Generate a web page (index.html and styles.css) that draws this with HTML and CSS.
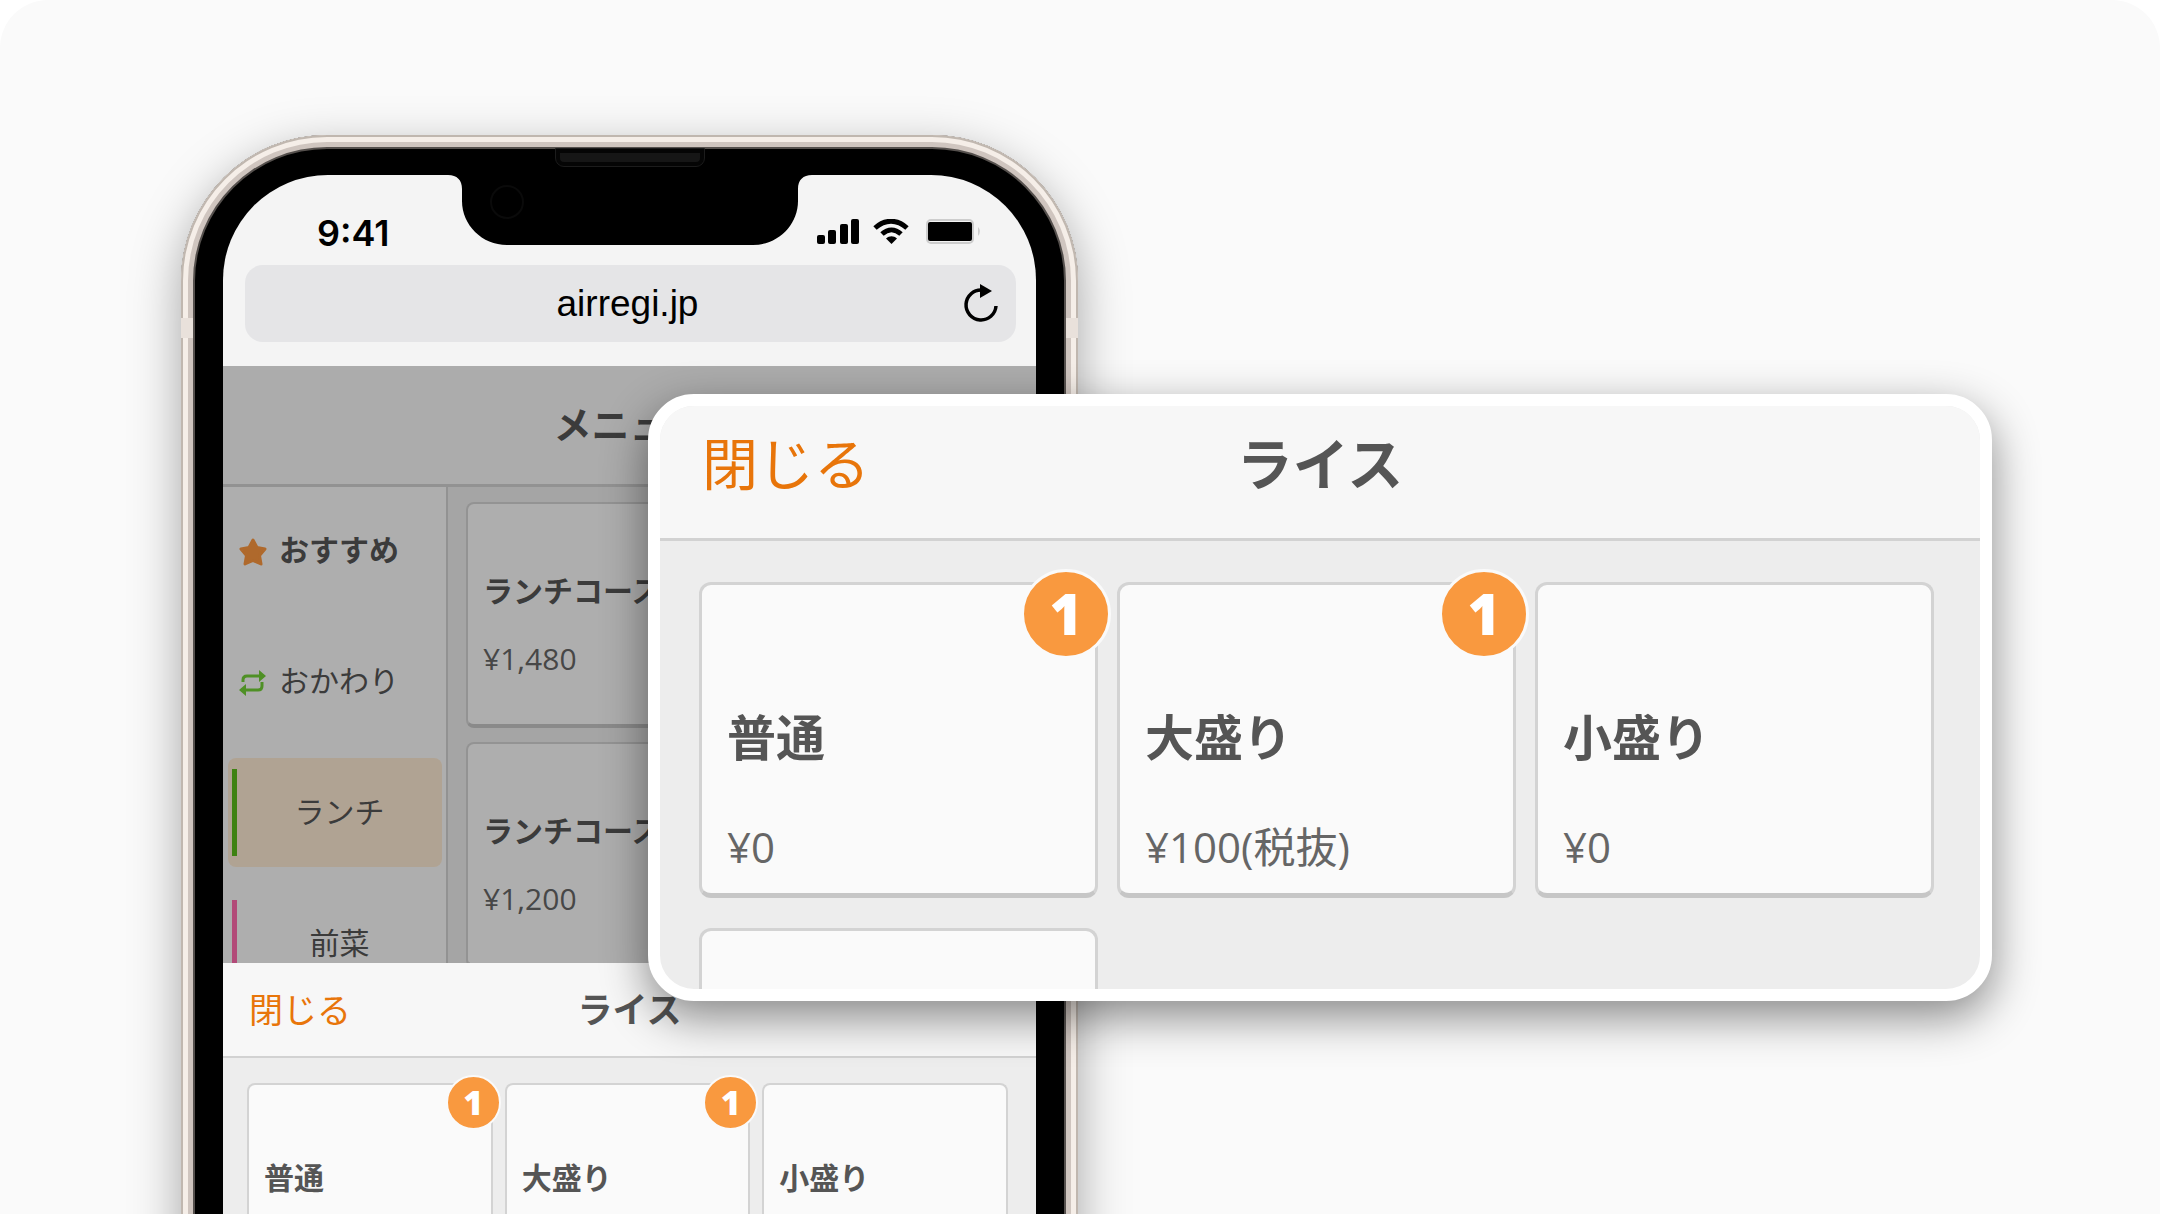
FILE: index.html
```html
<!DOCTYPE html>
<html lang="ja">
<head>
    <meta charset="UTF-8">
    <meta name="viewport" content="width=device-width, initial-scale=1.0">
    <title>ライス</title>
    <link rel="stylesheet" href="styles.css">
</head>
<body>
    <main class="stage">
        <div class="phone">
            <span class="speaker"></span>
            <div class="screen">
                <svg class="notch" viewBox="0 0 364 70" aria-hidden="true">
                    <path d="M0 0C9 0 14 5 14 14V26C14 50 34 70 59 70H305C330 70 350 50 350 26V14C350 5 355 0 364 0Z"/>
                    <circle cx="59" cy="27" r="16" fill="none" stroke="#0a0a0a" stroke-width="2"/>
                </svg>
                <div class="status">
                    <span class="time">9:41</span>
                    <svg class="status-icons" width="166" height="28" viewBox="0 0 166 28" aria-hidden="true">
                        <rect x="0" y="16" width="8" height="9" rx="2"/>
                        <rect x="11" y="11" width="8" height="14" rx="2"/>
                        <rect x="23" y="5" width="8" height="20" rx="2"/>
                        <rect x="34" y="0" width="8" height="25" rx="2"/>
                        <path d="M58 9C68 0 80 0 90 9" fill="none" stroke="#000" stroke-width="5"/>
                        <path d="M65 15C71 9.500 78 9.500 84 15" fill="none" stroke="#000" stroke-width="5"/>
                        <path d="M69 19.500C72.500 16.500 76.500 16.500 80 19.500L74.500 25Z"/>
                        <rect x="110" y="1" width="46" height="23" rx="4" fill="none" stroke="#cdcdcd" stroke-width="2"/>
                        <rect x="111" y="3" width="44" height="19" rx="2"/>
                        <path d="M161 8Q165 12 161 17Z" fill="#cdcdcd"/>
                    </svg>
                </div>
                <div class="url-bar">
                    <input class="url" type="text" value="airregi.jp" aria-label="アドレス">
                    <button class="reload" aria-label="再読み込み">
                        <svg width="38" height="40" viewBox="0 0 38 40">
                            <path d="M20 6A15 15 0 1 0 34 22" fill="none" stroke="#000" stroke-width="3.500"/>
                            <path d="M18 0L30 7L18 14Z"/>
                        </svg>
                    </button>
                </div>

                <section class="app">
                    <h1 class="app-title">メニュー</h1>
                    <div class="app-body">
                        <nav class="side">
                            <button class="side-item strong">
                                <svg width="30" height="30" viewBox="0 0 30 30"><path d="M15 3L19 10.500L27 12L21.500 18.500L23 27L15 23.500L7 27L8.500 18.500L3 12L11 10.500Z" fill="#fb973f" stroke="#fb973f" stroke-width="3" stroke-linejoin="round"/></svg>
                                おすすめ
                            </button>
                            <button class="side-item">
                                <svg width="30" height="30" viewBox="0 0 30 30" fill="none" stroke="#71ce36" stroke-width="3">
                                    <path d="M5 14V12Q5 8 9 8H22"/>
                                    <path d="M24 14V18Q24 22 20 22H7"/>
                                    <path d="M21 2L28 8L21 14Z M8 16L1 22L8 28Z" fill="#71ce36" stroke="none"/>
                                </svg>
                                おかわり
                            </button>
                            <button class="side-item category selected">ランチ</button>
                            <button class="side-item category pink">前菜</button>
                        </nav>
                        <div class="courses">
                            <button class="card course">
                                <span class="name">ランチコース</span>
                                <span class="price">¥1,480</span>
                            </button>
                            <button class="card course">
                                <span class="name">ランチコース</span>
                                <span class="price">¥1,200</span>
                            </button>
                        </div>
                    </div>
                </section>

                <section class="sheet">
                    <header class="sheet-head">
                        <button class="close">閉じる</button>
                        <h2 class="sheet-title">ライス</h2>
                    </header>
                    <div class="options">
                        <button class="card">
                            <span class="name">普通</span>
                            <span class="badge">1</span>
                        </button>
                        <button class="card">
                            <span class="name">大盛り</span>
                            <span class="badge">1</span>
                        </button>
                        <button class="card">
                            <span class="name">小盛り</span>
                        </button>
                    </div>
                </section>
            </div>
        </div>

        <section class="sheet popup">
            <header class="sheet-head">
                <button class="close">閉じる</button>
                <h2 class="sheet-title">ライス</h2>
            </header>
            <div class="options">
                <button class="card">
                    <span class="name">普通</span>
                    <span class="price">¥0</span>
                    <span class="badge">1</span>
                </button>
                <button class="card">
                    <span class="name">大盛り</span>
                    <span class="price">¥100(税抜)</span>
                    <span class="badge">1</span>
                </button>
                <button class="card">
                    <span class="name">小盛り</span>
                    <span class="price">¥0</span>
                </button>
                <button class="card"></button>
            </div>
        </section>
    </main>
</body>
</html>
```
FILE: styles.css
```css
* {
    box-sizing: border-box;
}
body {
    margin: 0;
    background: white;
    color: #555;
    font-family: "Open Sans", "Noto Sans CJK JP", sans-serif;
}
button {
    margin: 0;
    padding: 0;
    border: none;
    background: none;
    color: inherit;
    font-family: inherit;
    cursor: pointer;
}
h1, h2 {
    margin: 0;
}
.stage {
    display: grid;
    grid-template-columns: 181fr 467fr 430fr 914fr 168fr;
    grid-template-rows: 100%;
    height: calc(100vh - 2px);
    overflow: hidden;
    background: #fafafa;
    border-radius: 48px 48px 0 0;
}

/* phone */
.phone {
    grid-column: 2 / 4;
    grid-row: 1;
    position: relative;
    min-width: 0;
    margin: 135px 0 -200px;
    padding: 40px 42px 0;
    background: black;
    border-radius: 146px 146px 0 0;
    box-shadow: inset 0 0 0 2px #c0b7af, inset 0 0 0 7px #f5eee8, inset 0 0 0 12px #cfc5bf, inset 0 0 0 14px #55504d, 0 16px 50px rgba(0, 0, 0, 0.34);
}
/* antenna bands on both edges of the frame */
.phone::before,
.phone::after {
    content: "";
    position: absolute;
    top: 183px;
    left: 0;
    width: 12px;
    height: 20px;
    background: #e9e1db;
}
.phone::after {
    right: 0;
    left: auto;
}
.speaker {
    position: absolute;
    top: 14px;
    left: 50%;
    width: 148px;
    height: 17px;
    margin-left: -74px;
    background: #161616;
    border: 4px solid #050505;
    border-radius: 0 0 8px 8px;
    outline: 1px solid #1c1c1c;
}
.screen {
    position: relative;
    height: 100%;
    overflow: hidden;
    background: #f4f4f4;
    border-radius: 105px 105px 0 0;
}
.notch {
    position: absolute;
    top: 0;
    left: 50%;
    width: 364px;
    margin-left: -182px;
}
.status {
    display: flex;
    justify-content: space-between;
    align-items: center;
    height: 90px;
    padding: 26px 53px 0 94px;
}
.time {
    color: black;
    font-family: Inter, sans-serif;
    font-size: 36px;
    font-weight: 600;
    line-height: 40px;
}
.url-bar {
    display: flex;
    align-items: center;
    height: 77px;
    margin: 0 20px 24px 22px;
    padding: 0 16px;
    background: #e5e5e7;
    border-radius: 18px;
}
.url {
    flex: 1;
    min-width: 0;
    padding: 0 0 0 32px;
    border: none;
    background: none;
    color: black;
    font-family: "Liberation Sans", Arial, sans-serif;
    font-size: 37px;
    text-align: center;
}
.reload svg {
    display: block;
}

/* menu behind the sheet */
.app {
    position: relative;
    display: flex;
    flex-direction: column;
    height: 597px;
    overflow: hidden;
    background: #ededed;
}
.app::after {
    content: "";
    position: absolute;
    inset: 0;
    background: rgba(0, 0, 0, 0.3);
}
.app-title {
    flex: none;
    height: 121px;
    background: #f7f7f7;
    border-bottom: 3px solid #d1d1d1;
    font-size: 38px;
    line-height: 116px;
    text-align: center;
}
.app-body {
    display: flex;
    flex: 1;
}
.side {
    display: flex;
    flex-direction: column;
    gap: 22px;
    width: 225px;
    padding: 9px 4px 0 5px;
    background: #fafafa;
    border-right: 2px solid #d1d1d1;
}
.side-item {
    display: flex;
    flex: none;
    align-items: center;
    gap: 11px;
    height: 109px;
    padding: 0 0 6px 10px;
    border-radius: 8px;
    font-size: 30px;
}
.side-item svg {
    margin-top: 8px;
}
.strong {
    font-weight: bold;
}
.category {
    gap: 0;
    padding-left: 4px;
}
.category::before {
    content: "";
    width: 5px;
    height: 87px;
    margin: 6px auto 0 0;
    background: #5aba1a;
}
.category::after {
    content: "";
    margin-right: auto;
}
.pink::before {
    background: #ff6aac;
}
.selected {
    background: #fdead3;
}
.courses {
    display: flex;
    flex: 1;
    flex-direction: column;
    gap: 14px;
    padding: 15px 18px 0;
}

/* cards */
.card {
    position: relative;
    display: flex;
    flex: none;
    flex-direction: column;
    align-items: flex-start;
    height: 196px;
    padding: 75px 15px 0;
    background: #fafafa;
    border: 2px solid #d3d3d3;
    border-bottom: 4px solid #c6c6c6;
    border-radius: 8px;
    font-size: 30px;
    line-height: 36px;
}
.course {
    height: 226px;
    padding-top: 69px;
    gap: 32px;
}
.name {
    font-weight: bold;
}
.price {
    color: #666;
}
.badge {
    position: absolute;
    top: -10px;
    right: -10px;
    width: 55px;
    height: 55px;
    background: #f9993f;
    border: 2px solid #fafafa;
    border-radius: 50%;
    color: white;
    font-size: 34px;
    font-weight: 800;
    line-height: 50px;
    text-align: center;
}

/* sheet */
.sheet {
    height: 400px;
    background: #ededed;
}
.sheet-head {
    display: grid;
    grid-template-columns: 1fr auto 1fr;
    align-items: center;
    justify-items: start;
    height: 95px;
    padding: 0 26px;
    background: #f7f7f7;
    border-bottom: 2px solid #d2d2d2;
}
.close {
    color: #e8750a;
    font-size: 34px;
    line-height: 40px;
}
.sheet-title {
    font-size: 35px;
    line-height: 40px;
}
.options {
    display: grid;
    grid-template-columns: repeat(3, 1fr);
    gap: 20px 12px;
    padding: 25px 28px 0 24px;
}

/* enlarged sheet */
.popup {
    grid-column: 3 / 5;
    grid-row: 1;
    z-index: 1;
    height: 607px;
    min-width: 0;
    margin-top: 394px;
    overflow: hidden;
    border: 12px solid white;
    border-radius: 46px;
    box-shadow: 0 16px 46px rgba(0, 0, 0, 0.46);
}
.popup .sheet-head {
    height: 135px;
    padding: 0 42px 18px;
    border-bottom-width: 3px;
}
.popup .close,
.popup .sheet-title {
    font-size: 56px;
    line-height: 64px;
}
.popup .options {
    gap: 30px 19px;
    padding: 41px 46px 0 39px;
}
.popup .card {
    height: 316px;
    padding: 122px 25px 0;
    gap: 50px;
    border-width: 3px 3px 5px;
    border-radius: 12px;
    font-size: 49px;
    line-height: 60px;
}
.popup .price {
    font-size: 42px;
}
.popup .badge {
    top: -16px;
    right: -16px;
    width: 90px;
    height: 90px;
    border-width: 3px;
    font-size: 56px;
    line-height: 82px;
}
```
